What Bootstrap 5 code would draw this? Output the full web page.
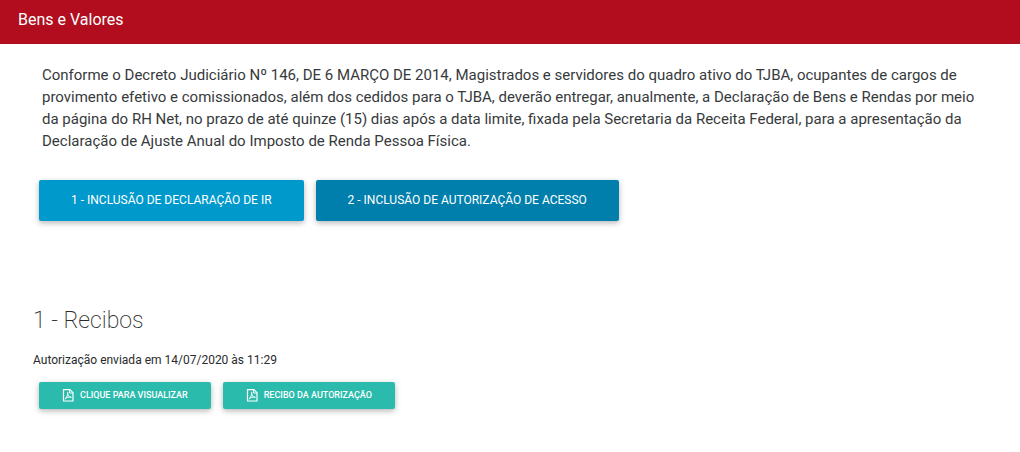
<!DOCTYPE html>
<html lang="pt-BR">
<head>
<meta charset="utf-8">
<meta name="viewport" content="width=device-width, initial-scale=1">
<title>Bens e Valores</title>
<link href="https://cdn.jsdelivr.net/npm/bootstrap@5.3.0/dist/css/bootstrap.min.css" rel="stylesheet">
<style>
  body { font-family: Roboto, sans-serif; color: #292b2c; background: #fff; }
  .topbar { background: #b10d1e; height: 44px; padding: 0 18px; }
  .topbar h1 { font-size: 16px; line-height: 20px; font-weight: 400; padding-bottom: 4px; }
  .intro { font-size: 15px; line-height: 22px; padding: 20px 42px 0; margin-bottom: 28px; color: #373a3c; }
  .actions { padding: 0 39px; gap: 12px; }
  .btn-flat { --bs-btn-color: #fff; --bs-btn-hover-color: #fff; --bs-btn-border-width: 0; --bs-btn-border-radius: 2px; text-transform: uppercase; box-shadow: 0 2px 5px rgba(0,0,0,.2), 0 2px 8px rgba(0,0,0,.1); }
  .btn-main { font-size: 12px; line-height: 21px; padding: 10px 32px; font-weight: 400; }
  .btn-sky { --bs-btn-bg: #0099cc; --bs-btn-hover-bg: #0088bb; }
  .btn-deep { --bs-btn-bg: #007fad; --bs-btn-hover-bg: #00729c; }
  .receipts { padding: 86px 33px 24px; }
  .receipts h2 { font-size: 23px; line-height: 28px; font-weight: 200; margin-bottom: 16px; }
  .receipts p { font-size: 12px; line-height: 18px; margin-bottom: 13px; }
  .files { padding: 0 6px; gap: 12px; }
  .btn-pdf { --bs-btn-bg: #2bbbad; --bs-btn-hover-bg: #26a99c; font-size: 9px; line-height: 15px; padding: 6px 23px; gap: 6px; font-weight: 500; }
</style>
</head>
<body>
<svg class="d-none" aria-hidden="true">
  <symbol id="pdf" viewBox="0 0 12 14">
    <g fill="none" stroke="currentColor" stroke-linejoin="round">
      <path d="M1.5 .6H7.9L11 3.6V12H1.5Z" stroke-width="1.2"/>
      <path d="M7.5 .8V4H10.8" stroke-width="1"/>
      <path d="M5.7 3.4C6.3 5.5 4.6 8.6 3 10.2C3.2 8.8 6.6 7.6 9.4 8.2C7.3 8.6 5.4 6 5.7 3.4Z" stroke-width="1"/>
    </g>
  </symbol>
</svg>
<header class="topbar d-flex align-items-center text-white">
  <h1 class="m-0">Bens e Valores</h1>
</header>
<main>
  <p class="intro">Conforme o Decreto Judiciário Nº 146, DE 6 MARÇO DE 2014, Magistrados e servidores do quadro ativo do TJBA, ocupantes de cargos de provimento efetivo e comissionados, além dos cedidos para o TJBA, deverão entregar, anualmente, a Declaração de Bens e Rendas por meio da página do RH Net, no prazo de até quinze (15) dias após a data limite, fixada pela Secretaria da Receita Federal, para a apresentação da Declaração de Ajuste Anual do Imposto de Renda Pessoa Física.</p>
  <div class="actions d-flex flex-wrap">
    <button type="button" class="btn btn-flat btn-main btn-sky">1 - Inclusão de Declaração de IR</button>
    <button type="button" class="btn btn-flat btn-main btn-deep">2 - Inclusão de Autorização de Acesso</button>
  </div>
  <section class="receipts">
    <h2>1 - Recibos</h2>
    <p>Autorização enviada em 14/07/2020 às 11:29</p>
    <div class="files d-flex flex-wrap">
      <button type="button" class="btn btn-flat btn-pdf d-inline-flex align-items-center"><svg width="12" height="14" aria-hidden="true"><use href="#pdf"/></svg>Clique para visualizar</button>
      <button type="button" class="btn btn-flat btn-pdf d-inline-flex align-items-center"><svg width="12" height="14" aria-hidden="true"><use href="#pdf"/></svg>Recibo da Autorização</button>
    </div>
  </section>
</main>
<script src="https://cdn.jsdelivr.net/npm/bootstrap@5.3.0/dist/js/bootstrap.bundle.min.js"></script>
</body>
</html>
